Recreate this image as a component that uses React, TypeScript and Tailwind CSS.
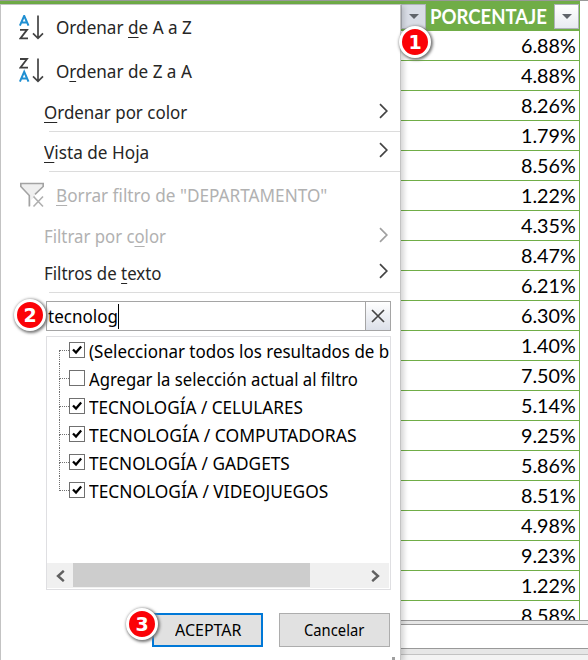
import { useLayoutEffect, useRef, useState } from "react";
import type { ReactNode } from "react";

/** One line of text, condensed or widened to the width of its label. */
function Fit({ w, right = false, children }: { w: number; right?: boolean; children: ReactNode }) {
  const ref = useRef<HTMLSpanElement>(null);
  const [scale, setScale] = useState(1);
  useLayoutEffect(() => {
    if (ref.current) setScale(w / ref.current.offsetWidth);
  }, [w]);
  return (
    <span
      ref={ref}
      className={`inline-block shrink-0 whitespace-pre ${right ? "origin-right" : "origin-left"}`}
      style={{ transform: `scaleX(${scale})` }}
    >
      {children}
    </span>
  );
}

function Key({ children }: { children: ReactNode }) {
  return <span className="underline decoration-1 underline-offset-[3px]">{children}</span>;
}

function Chevron({ muted = false }: { muted?: boolean }) {
  return (
    <svg className="mr-[11px] mb-[3px] ml-auto shrink-0" width="10" height="16" viewBox="0 0 10 16" fill="none">
      <path d="M1 1.2 7.8 8 1 14.8" stroke={muted ? "#a0a0a0" : "#444"} strokeWidth="1.7" />
    </svg>
  );
}

function SortIcon({ reverse = false }: { reverse?: boolean }) {
  const a = <path d="M.9 10.6 5.2 .8 9.5 10.6M2.3 7.4H8.1" stroke="#1f8fd2" strokeWidth="2" />;
  const z = <path d="M1 1H8L1.4 9.6H9" stroke="#404040" strokeWidth="1.8" />;
  return (
    <svg width="26" height="26" viewBox="0 0 26 26" fill="none" className="shrink-0">
      <g transform="translate(0 0)">{reverse ? z : a}</g>
      <g transform={reverse ? "translate(0 13)" : "translate(0 13.8)"}>{reverse ? a : z}</g>
      <path d="M19 .5V23.5M14 18.4 19 23.4 24 18.4" stroke="#444" strokeWidth="1.7" />
    </svg>
  );
}

function FunnelIcon() {
  return (
    <svg width="26" height="26" viewBox="0 0 26 26" fill="none" className="shrink-0">
      <path d="M1.8 1.5H24.2V4.5L16 12.5V15L12 18V24H10.3V14L1.8 4.5Z" fill="#efefef" />
      <path d="M10.3 24.5V13.5L1.8 4.5V1.5H24.2V4.5L16 12.3" stroke="#a3a3a3" strokeWidth="1.6" />
      <path d="M14.5 14.5 24 24.5M24 14.5 14.5 24.5" stroke="#b0b0b0" strokeWidth="1.6" />
    </svg>
  );
}

function Badge({ n, place }: { n: number; place: string }) {
  return (
    <div
      className={`absolute z-20 flex size-[32px] items-center justify-center rounded-full border-3 border-white bg-[#fb0207] font-['DejaVu_Sans'] text-[19px] leading-none font-bold text-white shadow-[1px_1px_3px_1px_#777] ${place}`}
    >
      {n}
    </div>
  );
}

function FilterButton({ active = false }: { active?: boolean }) {
  return (
    <div
      className={`flex h-[25px] w-[25px] shrink-0 items-center justify-center border border-[#b0b3bb] ${
        active ? "bg-[#d9dde6]" : "bg-linear-to-b from-white to-[#e8ebf1]"
      }`}
    >
      <svg width="10" height="5" viewBox="0 0 10 5">
        <path d="M0 0H10L5 5Z" fill="#60646b" />
      </svg>
    </div>
  );
}

const options = [
  { label: "(Seleccionar todos los resultados de b", w: 300, on: true },
  { label: "Agregar la selección actual al filtro", w: 269, on: false },
  { label: "TECNOLOGÍA / CELULARES", w: 214, on: true },
  { label: "TECNOLOGÍA / COMPUTADORAS", w: 268, on: true },
  { label: "TECNOLOGÍA / GADGETS", w: 201, on: true },
  { label: "TECNOLOGÍA / VIDEOJUEGOS", w: 239, on: true },
];

const percents = [
  "6.88%", "4.88%", "8.26%", "1.79%", "8.56%", "1.22%", "4.35%", "8.47%", "6.21%", "6.30%",
  "1.40%", "7.50%", "5.14%", "9.25%", "5.86%", "8.51%", "4.98%", "9.23%", "1.22%", "8.58%",
];

function Option({ label, w, on, first, last }: { label: string; w: number; on: boolean; first: boolean; last: boolean }) {
  return (
    <div className="flex h-7 items-center">
      <div className="ml-3 flex h-full w-[10px] shrink-0 flex-col">
        <div className={`h-[15px] border-b border-dotted border-[#707070] ${first ? "" : "border-l"}`} />
        <div className={`h-[13px] border-dotted border-[#707070] ${last ? "" : "border-l"}`} />
      </div>
      <div className="flex size-4 shrink-0 items-center justify-center border border-[#707070] bg-white">
        {on && (
          <svg width="10" height="10" viewBox="0 0 10 10" fill="none">
            <path d="M1 4.5 4 7.5 9.2 1.5" stroke="#000" strokeWidth="2.3" />
          </svg>
        )}
      </div>
      <div className="ml-1 pt-px">
        <Fit w={w}>{label}</Fit>
      </div>
    </div>
  );
}

function FilterMenu() {
  return (
    <div className="relative z-10 flex h-[656px] w-[401px] shrink-0 flex-col border-t border-r border-l border-[#c3c3c3] bg-white text-[18px] leading-6 text-[#262626] shadow-[3px_2px_5px_#0000002a]">
      <div className="flex h-[45px] items-center pl-[18px]">
        <SortIcon />
        <div className="mb-[2px] ml-[11px]"><Fit w={136}>Ordenar <Key>d</Key>e A a Z</Fit></div>
      </div>
      <div className="flex h-11 items-center pl-[18px]">
        <div className="-mt-[2px]"><SortIcon reverse /></div>
        <div className="mb-[2px] ml-[11px]"><Fit w={136}>O<Key>r</Key>denar de Z a A</Fit></div>
      </div>
      <div className="flex h-[37px] items-center pb-px pl-[43px]">
        <Fit w={143}><Key>O</Key>rdenar por color</Fit>
        <Chevron />
      </div>
      <div className="ml-12 h-px shrink-0 bg-[#dcdcdc]" />
      <div className="flex h-[39px] items-center pl-[43px]">
        <Fit w={105}><Key>V</Key>ista de Hoja</Fit>
        <Chevron />
      </div>
      <div className="ml-12 h-px shrink-0 bg-[#dcdcdc]" />
      <div className="flex h-12 items-center pl-[18px] text-[#b1b1b1]">
        <div className="-mt-[3px]"><FunnelIcon /></div>
        <div className="mb-[2px] ml-[11px]"><Fit w={271}><Key>B</Key>orrar filtro de "DEPARTAMENTO"</Fit></div>
      </div>
      <div className="flex h-[33px] items-center pb-px pl-[43px] text-[#b1b1b1]">
        <Fit w={122}>Filtrar por c<Key>o</Key>lor</Fit>
        <Chevron muted />
      </div>
      <div className="flex h-[39px] items-center pl-[43px]">
        <Fit w={118}>Filtros de <Key>t</Key>exto</Fit>
        <Chevron />
      </div>
      <div className="ml-12 h-px shrink-0 bg-[#dcdcdc]" />

      <div className="mt-2 ml-[45px] flex h-[30px] w-[345px] shrink-0 items-center border border-[#a5a5a5] text-black">
        <div className="ml-px w-[70px]"><Fit w={70}>tecnolog</Fit></div>
        <div className="h-[25px] w-px shrink-0 bg-black" />
        <div className="ml-auto flex h-full w-[25px] items-center justify-center border-l border-[#a5a5a5] bg-linear-to-b from-white to-[#dce0e9]">
          <svg width="14" height="14" viewBox="0 0 14 14" fill="none">
            <path d="M1 1 13 13M13 1 1 13" stroke="#444" strokeWidth="1.7" />
          </svg>
        </div>
      </div>

      <div className="mt-[5px] ml-[45px] flex h-[254px] w-[345px] shrink-0 flex-col border border-[#dfdfe2] text-black">
        <div className="-mt-px">
          {options.map((o, i) => (
            <Option key={o.label} {...o} first={i === 0} last={i === options.length - 1} />
          ))}
        </div>
        <div className="mt-auto mb-px flex h-[25px] w-[342px] items-start bg-[#f0f0f0]">
          <div className="flex h-full w-[26px] items-center justify-center">
            <svg width="9" height="12" viewBox="0 0 9 12" fill="none">
              <path d="M7.8 .8 2 6 7.8 11.2" stroke="#606060" strokeWidth="2.4" />
            </svg>
          </div>
          <div className="h-6 w-[237px] bg-[#cdcdcd]" />
          <div className="ml-auto flex h-full w-[27px] items-center justify-center">
            <svg width="9" height="12" viewBox="0 0 9 12" fill="none">
              <path d="M1.2 .8 7 6 1.2 11.2" stroke="#606060" strokeWidth="2.4" />
            </svg>
          </div>
        </div>
      </div>

      <div className="mt-[23px] ml-[151px] flex shrink-0 gap-4 text-[15.5px] text-black">
        <button className="flex h-[34px] w-[111px] items-center border-2 border-[#0078d7] bg-[#e1e1e1] pl-[21px]">
          <Fit w={66}>ACEPTAR</Fit>
        </button>
        <button className="flex h-[34px] w-[111px] items-center border border-[#adadad] bg-[#e1e1e1] pl-[24px]">
          <Fit w={60}>Cancelar</Fit>
        </button>
      </div>
      <div className="mt-auto ml-[391px] h-[3px] w-[3px] shrink-0 bg-[#a0a0a0]" />
      <Badge n={2} place="top-[294px] left-[13px]" />
      <Badge n={3} place="top-[603px] left-[125px]" />
      <Badge n={1} place="top-[21px] left-[398px]" />
    </div>
  );
}

function PercentColumn() {
  return (
    <div className="flex min-w-0 flex-1 flex-col">
      <div className="h-[616px] w-[179px] overflow-hidden border-r border-[#70ad47] font-['Lato','Liberation_Sans',sans-serif] text-black">
        <div className="flex h-[27px] items-start bg-[#70ad47] text-[20px] leading-[25px] font-bold text-white">
          <FilterButton active />
          <div className="ml-1 w-[124px]"><Fit w={117}>PORCENTAJE</Fit></div>
          <FilterButton />
        </div>
        {percents.map((p, i) => (
          <div key={i} className="flex h-[30px] items-center justify-end border-b border-[#70ad47] pt-px pr-[3px] text-[19px]">
            <Fit w={55} right>{p}</Fit>
          </div>
        ))}
      </div>
      <div className="h-[5px] shrink-0 border-y border-[#999] bg-[#e6e6e6]" />
      <div className="h-[23px] shrink-0 bg-white" />
      <div className="h-[7px] shrink-0 border-y border-t-[#999] border-b-[#c2c2c2] bg-[#e6e6e6]" />
      <div className="flex-1 bg-[#f3f3f3]" />
    </div>
  );
}

export default function App() {
  return (
    <div className="flex h-[660px] w-[588px] flex-col overflow-hidden bg-white font-['Noto_Sans','Open_Sans',sans-serif]">
      <div className="h-px shrink-0 bg-[#999]" />
      <div className="h-[3px] w-[580px] shrink-0 bg-[#70ad47]" />
      <div className="flex h-[656px]">
        <FilterMenu />
        <PercentColumn />
      </div>
    </div>
  );
}
